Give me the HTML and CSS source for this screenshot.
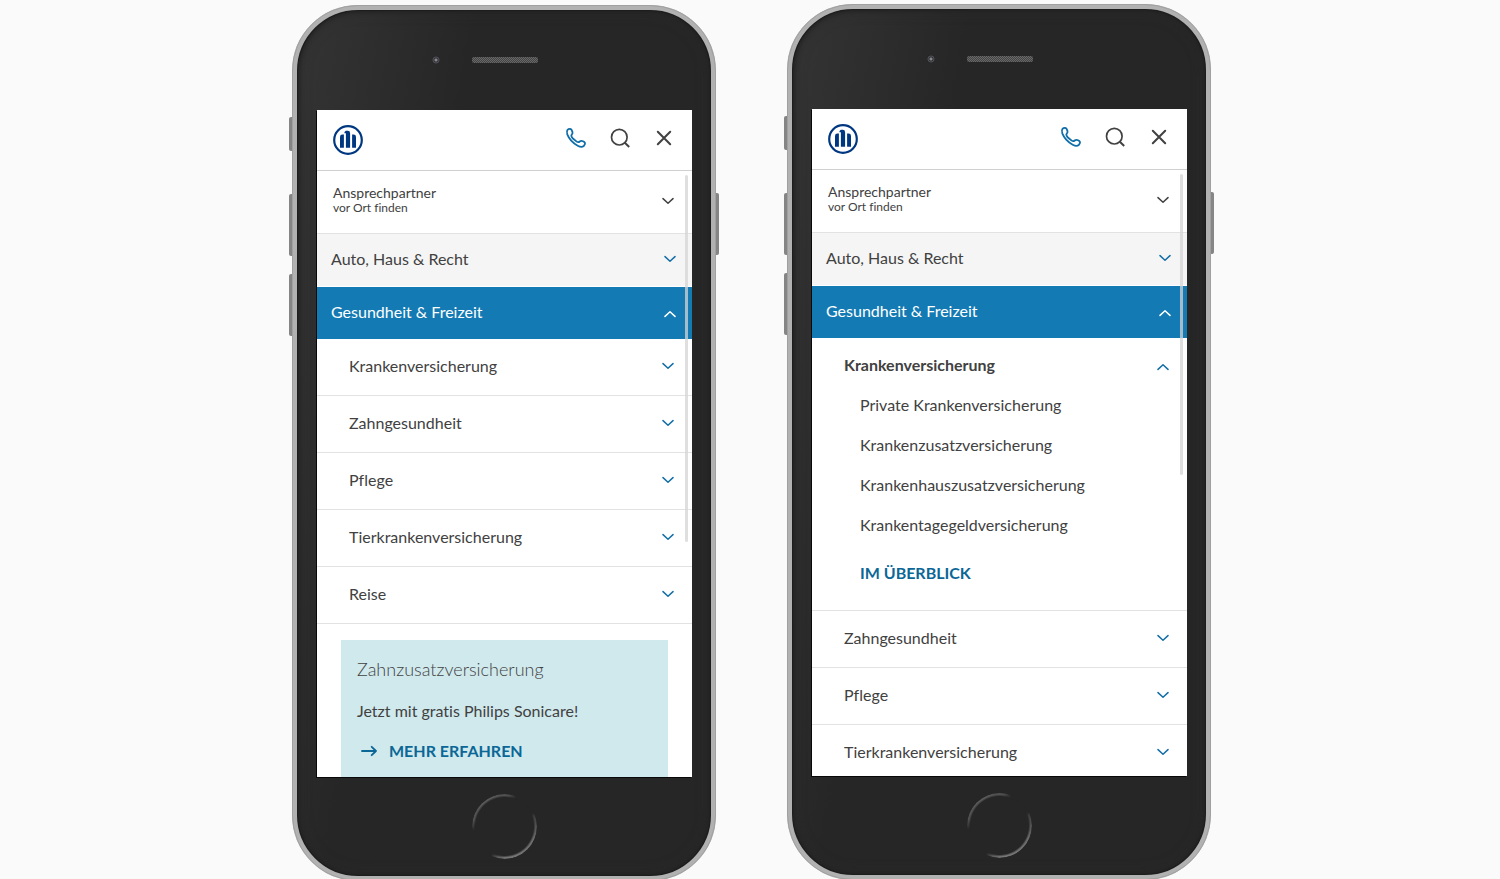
FILE: index.html
```html
<!DOCTYPE html>
<html lang="de">
<head>
<meta charset="utf-8">
<meta name="viewport" content="width=device-width, initial-scale=1">
<title>Allianz Navigation</title>
<link rel="stylesheet" href="styles.css">
</head>
<body>
<svg class="sprite" aria-hidden="true">
  <symbol id="logo" viewBox="0 0 30 30">
    <circle cx="15" cy="15" r="13.8" fill="#fff" stroke="#003781" stroke-width="2.2"/>
    <path fill="#003781" d="M10.9 22.8V9.6H9.4Q7 9.6 7 12v10.8zM19.1 22.8V9.6h1.5Q23 9.6 23 12v10.8zM12.9 22.8V8.2h-1.4V7.1l1.3-1.3h2Q17.1 5.8 17.1 8.2v14.6z"/>
  </symbol>
  <symbol id="phone" viewBox="0 0 24 24">
    <path fill="none" stroke="currentColor" stroke-width="1.8" stroke-linejoin="round" d="M3.5 3.9C4.8 2.6 6.8 2.6 7.6 3.9L8.5 6.2C8.9 7.4 8.2 8.1 7.5 9C6.9 9.9 7.7 11.2 9.2 12.8L12.4 15.4C13.8 16.5 14.9 16.3 15.7 15.5C16.8 14.6 18 14.8 19 15.3L20.3 16.1C21.6 17 21 18.8 19.7 20C18.2 21.3 16.2 21 13.7 19.7C9.1 17.2 5.1 13 3.3 8.4C2.7 6.6 2.6 4.9 3.5 3.9Z"/>
  </symbol>
  <symbol id="search" viewBox="0 0 24 24">
    <circle cx="11.3" cy="11.2" r="7.8" fill="none" stroke="currentColor" stroke-width="1.7"/>
    <path stroke="currentColor" stroke-width="2" d="m16.6 16.5 4.6 4.5"/>
  </symbol>
  <symbol id="close" viewBox="0 0 24 24">
    <path fill="none" stroke="currentColor" stroke-width="2" stroke-linecap="round" d="m5.8 5.8 12.4 12.4m0-12.4L5.8 18.2"/>
  </symbol>
  <symbol id="chevron" viewBox="0 0 12 8">
    <path fill="none" stroke="currentColor" stroke-width="1.5" stroke-linecap="round" stroke-linejoin="round" d="m1 1.6 5 4.6 5-4.6"/>
  </symbol>
  <symbol id="arrow" viewBox="0 0 16 12">
    <path fill="none" stroke="currentColor" stroke-width="1.8" stroke-linecap="round" stroke-linejoin="round" d="M1 6h14M10.7 1.8 15 6l-4.3 4.2"/>
  </symbol>
</svg>

<main class="stage">
  <section class="phone phone-lower" aria-label="Hauptmenü">
    <span class="key key-mute"></span><span class="key key-up"></span><span class="key key-down"></span><span class="key key-power"></span>
    <div class="bezel-top"><span class="camera"></span><span class="speaker"></span></div>
    <div class="screen">
      <header class="header">
        <a class="logo" href="#" aria-label="Allianz"><svg><use href="#logo"/></svg></a>
        <div class="tools">
          <button class="tool tool-blue" aria-label="Telefon"><svg><use href="#phone"/></svg></button>
          <button class="tool" aria-label="Suche"><svg><use href="#search"/></svg></button>
          <button class="tool" aria-label="Schließen"><svg><use href="#close"/></svg></button>
        </div>
      </header>
      <nav class="menu">
        <button class="row contact"><span class="contact-text">Ansprechpartner<small>vor Ort finden</small></span><svg class="chevron"><use href="#chevron"/></svg></button>
        <button class="row category">Auto, Haus &amp; Recht<svg class="chevron"><use href="#chevron"/></svg></button>
        <button class="row category active" aria-expanded="true">Gesundheit &amp; Freizeit<svg class="chevron up"><use href="#chevron"/></svg></button>
        <ul class="topics">
          <li><button class="row topic">Krankenversicherung<svg class="chevron"><use href="#chevron"/></svg></button></li>
          <li><button class="row topic">Zahngesundheit<svg class="chevron"><use href="#chevron"/></svg></button></li>
          <li><button class="row topic">Pflege<svg class="chevron"><use href="#chevron"/></svg></button></li>
          <li><button class="row topic">Tierkrankenversicherung<svg class="chevron"><use href="#chevron"/></svg></button></li>
          <li><button class="row topic">Reise<svg class="chevron"><use href="#chevron"/></svg></button></li>
        </ul>
        <article class="promo">
          <h2>Zahnzusatzversicherung</h2>
          <p>Jetzt mit gratis Philips Sonicare!</p>
          <a class="action" href="#"><svg class="arrow"><use href="#arrow"/></svg>MEHR ERFAHREN</a>
        </article>
      </nav>
      <span class="scrollbar scrollbar-long"></span>
    </div>
    <div class="bezel-bottom"><span class="home"></span></div>
  </section>

  <section class="phone" aria-label="Untermenü">
    <span class="key key-mute"></span><span class="key key-up"></span><span class="key key-down"></span><span class="key key-power"></span>
    <div class="bezel-top"><span class="camera"></span><span class="speaker"></span></div>
    <div class="screen">
      <header class="header">
        <a class="logo" href="#" aria-label="Allianz"><svg><use href="#logo"/></svg></a>
        <div class="tools">
          <button class="tool tool-blue" aria-label="Telefon"><svg><use href="#phone"/></svg></button>
          <button class="tool" aria-label="Suche"><svg><use href="#search"/></svg></button>
          <button class="tool" aria-label="Schließen"><svg><use href="#close"/></svg></button>
        </div>
      </header>
      <nav class="menu">
        <button class="row contact"><span class="contact-text">Ansprechpartner<small>vor Ort finden</small></span><svg class="chevron"><use href="#chevron"/></svg></button>
        <button class="row category">Auto, Haus &amp; Recht<svg class="chevron"><use href="#chevron"/></svg></button>
        <button class="row category active" aria-expanded="true">Gesundheit &amp; Freizeit<svg class="chevron up"><use href="#chevron"/></svg></button>
        <ul class="topics">
          <li>
            <button class="row topic open" aria-expanded="true">Krankenversicherung<svg class="chevron up"><use href="#chevron"/></svg></button>
            <ul class="links">
              <li><a href="#">Private Krankenversicherung</a></li>
              <li><a href="#">Krankenzusatzversicherung</a></li>
              <li><a href="#">Krankenhauszusatzversicherung</a></li>
              <li><a href="#">Krankentagegeldversicherung</a></li>
              <li><a class="action overview" href="#">IM ÜBERBLICK</a></li>
            </ul>
          </li>
          <li><button class="row topic">Zahngesundheit<svg class="chevron"><use href="#chevron"/></svg></button></li>
          <li><button class="row topic">Pflege<svg class="chevron"><use href="#chevron"/></svg></button></li>
          <li><button class="row topic">Tierkrankenversicherung<svg class="chevron"><use href="#chevron"/></svg></button></li>
        </ul>
      </nav>
      <span class="scrollbar"></span>
    </div>
    <div class="bezel-bottom"><span class="home"></span></div>
  </section>
</main>
</body>
</html>
```
FILE: styles.css
```css
* { box-sizing: border-box; }

body {
  margin: 0;
  background: #fafafa;
  color: #414141;
  font: 16px/20px Lato, "Noto Sans", sans-serif;
  font-variant-ligatures: none;
}

button {
  border: 0;
  background: none;
  color: inherit;
  font: inherit;
  text-align: left;
  cursor: pointer;
}

a { color: inherit; text-decoration: none; }
ul { margin: 0; padding: 0; list-style: none; }
svg { display: block; }
.sprite { position: absolute; width: 0; height: 0; }

.stage {
  display: flex;
  justify-content: center;
  align-items: flex-start;
  gap: 71px;
  height: 100vh;
  padding: 4px 0 0 3px;
  overflow: hidden;
}

/* Device frame */
.phone {
  position: relative;
  flex: 0 1 424px;
  padding: 0 19px 0 20px;
  border: 5px solid #b1b1b1;
  border-radius: 66px;
  background: linear-gradient(100deg, #343434 0%, #2e2e2e 14%, #262626 32%, #262626 100%);
  box-shadow: inset 0 0 0 1px #1d1d1d, inset 0 0 5px 2px #1f1f1f, inset 0 0 14px #303030;
}
.phone::before {
  content: "";
  position: absolute;
  inset: -5px;
  border: 1px solid #a0a0a0;
  border-radius: 66px;
}
.phone-lower { margin-top: 1px; }

.key {
  position: absolute;
  left: -8px;
  width: 3px;
  height: 62px;
  border-radius: 2px 0 0 2px;
  background: #858585;
}
.key-mute { top: 107px; height: 34px; }
.key-up { top: 184px; }
.key-down { top: 264px; }
.key-power {
  top: 183px;
  right: -8px;
  left: auto;
  border-radius: 0 2px 2px 0;
}

.bezel-top {
  position: relative;
  display: flex;
  justify-content: center;
  height: 100px;
  padding-top: 47px;
}
.speaker {
  width: 66px;
  height: 6px;
  border-radius: 2px;
  background: repeating-conic-gradient(#686868 0 25%, #444 0 50%) 0 0 / 2px 2px;
}
.camera {
  position: absolute;
  top: 46px;
  left: 115px;
  width: 8px;
  height: 8px;
  border-radius: 50%;
  background: radial-gradient(circle, #888 0 1px, #2b2b33 2px, #55555b 3px, #202024 4px);
}

.bezel-bottom {
  display: flex;
  justify-content: center;
  padding: 17px 0 17px;
}
.home {
  width: 65px;
  height: 65px;
  border-radius: 50%;
  background: conic-gradient(#505050 0 2%, #262626 6% 18%, #404040 20%, #6c6c6c 32%, #777 48%, #606060 53%, #262626 57% 73%, #505050 78%, #5a5a5a 90%, #505050);
  -webkit-mask: radial-gradient(circle, transparent 29px, #000 31px);
  mask: radial-gradient(circle, transparent 29px, #000 31px);
}

.screen {
  position: relative;
  height: 667px;
  overflow: hidden;
  background: #fff;
  box-shadow: -1px 1px 0 #080808;
}

/* Header */
.header {
  display: flex;
  justify-content: space-between;
  align-items: center;
  height: 61px;
  padding: 0 16px;
  border-bottom: 1px solid #d0d0d0;
}
.logo svg { width: 30px; height: 30px; }
.tools {
  display: flex;
  gap: 20px;
  padding-bottom: 4px;
}
.tool { padding: 0; }
.tool svg { width: 24px; height: 24px; }
.tool-blue { color: #0f6ea8; }

/* Menu */
.row {
  display: flex;
  justify-content: space-between;
  align-items: center;
  width: 100%;
}
.chevron {
  flex: none;
  width: 12px;
  height: 8px;
  color: #146fa6;
}
.up {
  margin-top: 4px;
  transform: rotate(180deg);
}

.contact {
  height: 62px;
  padding: 0 18px 2px 16px;
  font-size: 14px;
  line-height: 16px;
}
.contact-text { padding-bottom: 2px; }
.contact small {
  display: block;
  font-size: 12px;
  line-height: 14px;
}
.contact .chevron { color: #414141; }

.category {
  height: 54px;
  padding: 0 16px 2px 14px;
  border-top: 1px solid #e2e2e2;
  border-bottom: 1px solid #fff;
  background: #f5f5f5;
}
.active {
  height: 52px;
  border: 0;
  background: #137ab3;
  color: #fff;
}
.active .chevron { color: #fff; }

.topics > li { border-bottom: 1px solid #e2e2e2; }
.topic { padding: 17px 18px 19px 32px; }
.open {
  padding-bottom: 11px;
  font-weight: 700;
}

.links { padding: 0 18px 27px 48px; }
.links a {
  display: block;
  padding: 9px 0 11px;
}
.action {
  color: #0b6796;
  font-weight: 700;
}
.links .overview { padding: 17px 0 0; }

.promo {
  margin: 16px 24px;
  padding: 17px 16px;
  background: #d0e9ed;
}
.promo h2 {
  margin: 0;
  font-size: 18px;
  font-weight: 300;
  line-height: 24px;
}
.promo p { margin: 20px 0; }
.promo .action {
  display: flex;
  align-items: center;
  gap: 12px;
  padding-left: 4px;
}
.arrow { width: 16px; height: 12px; }

.scrollbar {
  position: absolute;
  top: 65px;
  right: 4px;
  width: 3px;
  height: 301px;
  border-radius: 2px;
  background: rgba(212, 212, 212, .75);
}
.scrollbar-long { height: 367px; }
```
